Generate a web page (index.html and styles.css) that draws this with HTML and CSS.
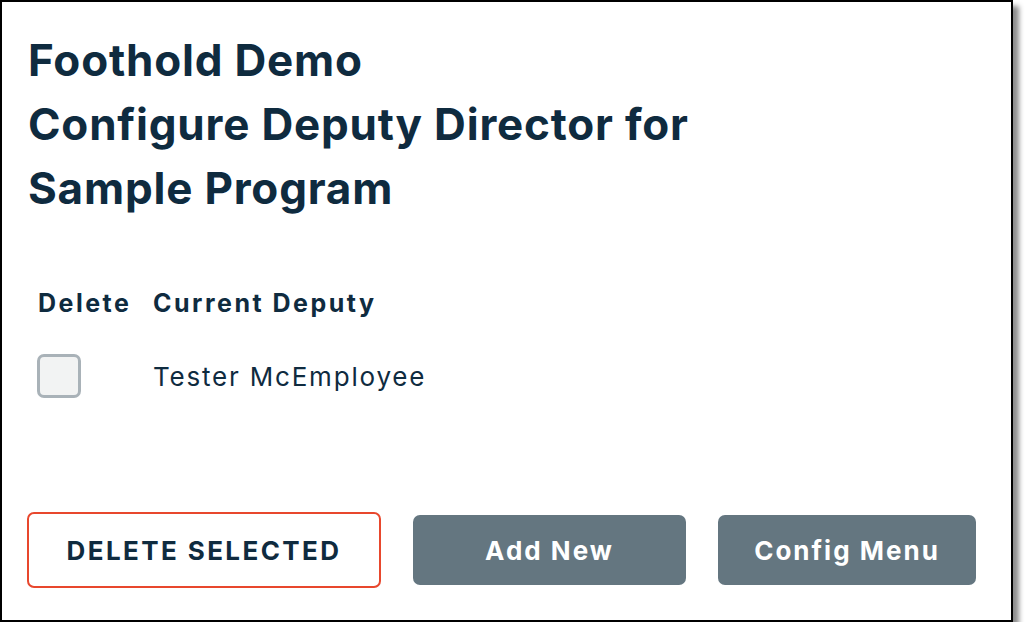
FILE: index.html
```html
<!DOCTYPE html>
<html lang="en">
<head>
  <meta charset="UTF-8"/>
  <title>Configure Deputy Director</title>
  <link rel="stylesheet" href="styles.css">
</head>
<body>
  <div class="frame">
    <h1>Foothold Demo<br>Configure Deputy Director for<br>Sample Program</h1>

    <div class="deputies">
      <div class="th">Delete</div>
      <div class="th">Current Deputy</div>
      <div class="cell"><span class="check"></span></div>
      <div class="cell name">Tester McEmployee</div>
    </div>

    <div class="actions">
      <button class="btn btn-outline">DELETE SELECTED</button>
      <button class="btn btn-gray add">Add New</button>
      <button class="btn btn-gray config">Config Menu</button>
    </div>
  </div>
</body>
</html>
```

FILE: styles.css
```css
body { margin:0; background:#fff; font-family:'Inter','Noto Sans',sans-serif; color:#0f2b3f; }
.frame { width:1013px; height:622px; box-sizing:border-box; border:2px solid #000; background:#fff; box-shadow:6px 6px 5px rgba(0,0,0,0.45); padding:26px 0 0 26px; }
h1 { margin:0; font-size:44px; line-height:64px; font-weight:700; letter-spacing:0.8px; color:#0f2b3f; }
.deputies { display:grid; grid-template-columns:92px auto; column-gap:23px; margin:66px 0 0 10px; justify-content:start; }
.th { font-size:25px; font-weight:700; line-height:34px; letter-spacing:2.5px; white-space:nowrap; }
.cell { height:44px; margin-top:34px; display:flex; align-items:center; }
.name { font-size:26px; letter-spacing:1.8px; }
.check { width:44px; height:44px; box-sizing:border-box; border:3px solid #a9b2b8; border-radius:7px; background:#f2f3f3; margin-left:-1px; }
.actions { display:flex; align-items:center; gap:32px; margin-top:114px; margin-left:-1px; }
.btn { font-family:inherit; font-size:26px; font-weight:700; border-radius:7px; cursor:pointer; letter-spacing:2px; padding:0; }
.btn-outline { width:354px; height:76px; background:#fff; border:2px solid #e8472d; color:#0f2b3f; letter-spacing:2.4px; }
.btn-gray { height:70px; background:#647680; border:none; color:#fff; }
.add { width:273px; }
.config { width:258px; }
```
